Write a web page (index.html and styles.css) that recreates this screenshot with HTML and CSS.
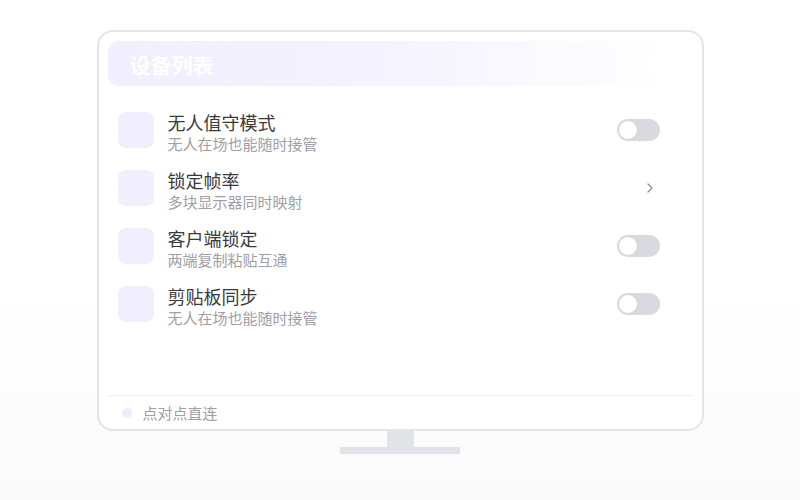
FILE: index.html
```html
<!DOCTYPE html>
<html lang="zh-CN">
<head>
  <meta charset="UTF-8">
  <meta name="viewport" content="width=device-width, initial-scale=1.0">
  <title>设备列表</title>
  <link rel="stylesheet" href="styles.css">
</head>
<body>
  <div class="monitor">
    <div class="screen">
      <!-- Header -->
      <div class="header">
        <span class="header-title">设备列表</span>
        <div class="header-dots">
          <span></span><span></span><span></span>
        </div>
      </div>

      <!-- Settings list -->
      <div class="list">
        <div class="row">
          <div class="row-icon"></div>
          <div class="row-text">
            <div class="row-title">无人值守模式</div>
            <div class="row-sub">无人在场也能随时接管</div>
          </div>
          <div class="toggle"><span class="knob"></span></div>
        </div>
        <div class="row">
          <div class="row-icon"></div>
          <div class="row-text">
            <div class="row-title">锁定帧率</div>
            <div class="row-sub">多块显示器同时映射</div>
          </div>
          <svg class="chevron" width="6" height="10" viewBox="0 0 6 10">
            <polyline points="1,1 5,5 1,9" fill="none" stroke="#8a8d94" stroke-width="1.3" stroke-linecap="round" stroke-linejoin="round"/>
          </svg>
        </div>
        <div class="row">
          <div class="row-icon"></div>
          <div class="row-text">
            <div class="row-title">客户端锁定</div>
            <div class="row-sub">两端复制粘贴互通</div>
          </div>
          <div class="toggle"><span class="knob"></span></div>
        </div>
        <div class="row">
          <div class="row-icon"></div>
          <div class="row-text">
            <div class="row-title">剪贴板同步</div>
            <div class="row-sub">无人在场也能随时接管</div>
          </div>
          <div class="toggle"><span class="knob"></span></div>
        </div>
      </div>

      <!-- Footer -->
      <div class="footer">
        <span class="footer-dot"></span>
        <span class="footer-text">点对点直连</span>
      </div>
    </div>
    <div class="stand-neck"></div>
    <div class="stand-base"></div>
  </div>
</body>
</html>
```

FILE: styles.css
```css
body {
  margin: 0;
  padding: 0;
  height: 500px;
  font-family: "Noto Sans CJK SC", "Noto Sans", sans-serif;
  background: linear-gradient(to bottom, #ffffff 0%, #ffffff 55%, #fafafa 100%);
  overflow: hidden;
}

.monitor {
  display: flex;
  flex-direction: column;
  align-items: center;
  padding-top: 30px;
}

.screen {
  box-sizing: border-box;
  width: 607px;
  height: 401px;
  border: 2px solid #e3e5ea;
  border-radius: 16px;
  background: #fff;
  padding: 9px 9px 0;
  display: flex;
  flex-direction: column;
}

.header {
  height: 45px;
  border-radius: 10px;
  background: linear-gradient(to right, #f1effd 0%, #f4f2fe 40%, #fcfcff 85%, #ffffff 95%);
  display: flex;
  align-items: center;
  justify-content: space-between;
  padding: 0 20px 0 22px;
}

.header-title {
  color: #fff;
  font-size: 21px;
  font-weight: 700;
}

.header-dots {
  display: flex;
  gap: 5px;
}

.header-dots span {
  width: 12px;
  height: 12px;
  border-radius: 50%;
  background: #fff;
  opacity: 0.6;
}

.list {
  flex: 1;
  padding-top: 15px;
}

.row {
  height: 58px;
  display: flex;
  align-items: center;
  padding: 0 33px 0 10px;
}

.row-icon {
  width: 36px;
  height: 36px;
  border-radius: 8px;
  background: #f1eefd;
  flex-shrink: 0;
}

.row-text {
  flex: 1;
  margin-left: 14px;
  padding-top: 5px;
}

.row-title {
  font-size: 18px;
  line-height: 22px;
  color: #3a3a3a;
}

.row-sub {
  margin-top: 1px;
  font-size: 15px;
  line-height: 20px;
  color: #a0a0a5;
}

.toggle {
  width: 43px;
  height: 22px;
  border-radius: 11px;
  background: #d8dae0;
  position: relative;
}

.knob {
  position: absolute;
  left: 1px;
  top: 1px;
  width: 18px;
  height: 18px;
  border-radius: 50%;
  background: #fff;
  border: 1px solid #d0d3da;
}

.chevron {
  margin-right: 7px;
}

.footer {
  height: 33px;
  border-top: 1px solid #eef0f4;
  display: flex;
  align-items: center;
  padding-left: 14px;
}

.footer-dot {
  width: 10px;
  height: 10px;
  border-radius: 50%;
  background: #efecfd;
}

.footer-text {
  margin-left: 11px;
  font-size: 15px;
  color: #a0a0a5;
}

.stand-neck {
  width: 27px;
  height: 16px;
  background: #e0e3e7;
}

.stand-base {
  width: 120px;
  height: 7px;
  background: #e0e3e7;
}
```
